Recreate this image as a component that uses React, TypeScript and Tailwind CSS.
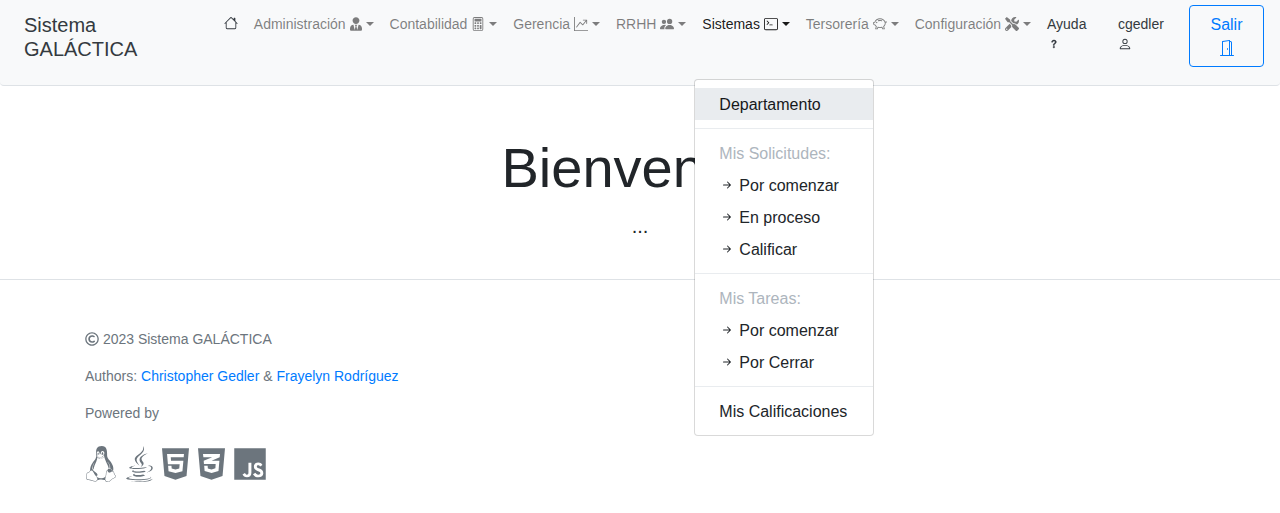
import type { ReactNode } from "react";
import {
  BsArrowRightShort,
  BsCalculator,
  BsDoorOpen,
  BsGraphUpArrow,
  BsHouse,
  BsPeopleFill,
  BsPerson,
  BsPiggyBank,
  BsQuestion,
  BsTerminal,
} from "react-icons/bs";
import { FaCss3Alt, FaHtml5, FaJava, FaJs, FaLinux, FaRegCopyright, FaTools, FaUserTie } from "react-icons/fa";

const navIcon = "inline-block size-[14px] align-[-2px]";

function Caret() {
  return (
    <span className="ml-1 inline-block border-x-4 border-t-4 border-x-transparent border-t-current align-[3px]" />
  );
}

type DropdownProps = {
  label: string;
  icon: ReactNode;
  open?: boolean;
  children?: ReactNode;
};

function NavDropdown({ label, icon, open, children }: DropdownProps) {
  return (
    <li className="relative">
      <button
        type="button"
        aria-haspopup="menu"
        aria-expanded={open ? "true" : "false"}
        className={`cursor-pointer px-2 pt-[9px] pb-2 whitespace-nowrap ${open ? "text-black/90" : "text-black/50"}`}
      >
        {label} {icon}
        <Caret />
      </button>
      {children}
    </li>
  );
}

function MenuItem({ children, active, arrow }: { children: ReactNode; active?: boolean; arrow?: boolean }) {
  return (
    <a
      href="#"
      role="menuitem"
      className={`block px-6 pt-[5px] pb-[3px] whitespace-nowrap ${active ? "bg-[#e9ecef] text-[#16181b]" : "text-[#212529]"}`}
    >
      {arrow && <BsArrowRightShort className="mr-1 inline-block size-4 align-[-2px]" />}
      {children}
    </a>
  );
}

function MenuTitle({ children }: { children: ReactNode }) {
  return <span className="block px-6 pt-[5px] pb-[3px] text-[#adb5bd]">{children}</span>;
}

function Divider() {
  return <hr className="my-2 border-[#e9ecef]" />;
}

export default function App() {
  return (
    <div className="bg-white font-['Liberation_Sans',Arial,sans-serif] text-base text-[#212529]">
      <nav className="flex items-start rounded-b border-b border-[#dee2e6] bg-[#f8f9fa] pt-[5px] pr-4 pb-[18px] pl-6">
        <div className="flex-1 pt-2">
          <a href="#" className="block w-min text-xl leading-6 text-[#343a40]">
            Sistema GALÁCTICA
          </a>
        </div>
        <ul className="flex self-stretch text-sm leading-5">
          <li>
            <a href="#" aria-label="Inicio" className="block px-2 pt-2 pb-2 text-[#343a40]">
              <BsHouse className={navIcon} />
            </a>
          </li>
          <NavDropdown label="Administración" icon={<FaUserTie className="inline-block h-[14px] w-3 align-[-2px]" />} />
          <NavDropdown label="Contabilidad" icon={<BsCalculator className={navIcon} />} />
          <NavDropdown label="Gerencia" icon={<BsGraphUpArrow className={navIcon} />} />
          <NavDropdown label="RRHH" icon={<BsPeopleFill className={navIcon} />} />
          <NavDropdown label="Sistemas" icon={<BsTerminal className={navIcon} />} open>
            <div
              role="menu"
              className="absolute top-full left-0 z-10 mt-3 min-w-[180px] rounded border border-black/15 bg-white bg-clip-padding py-2 text-base leading-6"
            >
              <MenuItem active>Departamento</MenuItem>
              <Divider />
              <MenuTitle>Mis Solicitudes:</MenuTitle>
              <MenuItem arrow>Por comenzar</MenuItem>
              <MenuItem arrow>En proceso</MenuItem>
              <MenuItem arrow>Calificar</MenuItem>
              <Divider />
              <MenuTitle>Mis Tareas:</MenuTitle>
              <MenuItem arrow>Por comenzar</MenuItem>
              <MenuItem arrow>Por Cerrar</MenuItem>
              <Divider />
              <MenuItem>Mis Calificaciones</MenuItem>
            </div>
          </NavDropdown>
          <NavDropdown label="Tersorería" icon={<BsPiggyBank className={navIcon} />} />
          <NavDropdown label="Configuración" icon={<FaTools className={navIcon} />} />
          <li className="w-[71px]">
            <a href="#" className="block px-2 pt-[9px] pb-2 text-[#343a40]">
              Ayuda <BsQuestion className="inline-block size-[14px] stroke-[0.5] align-[-2px]" />
            </a>
          </li>
          <li className="w-[71px]">
            <a href="#" className="block px-2 pt-[9px] pb-2 text-[#343a40]">
              cgedler <BsPerson className={navIcon} />
            </a>
          </li>
        </ul>
        <button
          type="button"
          className="ml-2 w-[75px] cursor-pointer rounded border border-[#007bff] px-3 pt-[7px] pb-[5px] leading-6 text-[#007bff]"
        >
          Salir <BsDoorOpen className="inline-block size-4 align-[-2px]" />
        </button>
      </nav>

      <main className="border-b border-[#dee2e6] pt-12 pb-[38px] text-center">
        <h1 className="text-[56px] leading-[67px]">Bienvenido</h1>
        <p className="mt-[10px] text-xl leading-[30px]">...</p>
      </main>

      <footer className="mx-auto max-w-[1110px] pt-[49px] text-sm leading-[21px] text-[#6c757d]">
        <p className="mb-4">
          <FaRegCopyright className="inline-block size-[14px] align-[-2px]" /> 2023 Sistema GALÁCTICA
        </p>
        <p className="mb-4">
          Authors:{" "}
          <a href="#" className="text-[#007bff]">
            Christopher Gedler
          </a>{" "}
          &amp;{" "}
          <a href="#" className="text-[#007bff]">
            Frayelyn Rodríguez
          </a>
        </p>
        <p>Powered by</p>
        <div className="mt-[22px] flex gap-[9px]">
          <FaLinux className="h-9 w-8" />
          <FaJava className="h-9 w-[27px]" />
          <FaHtml5 className="h-9 w-[27px]" />
          <FaCss3Alt className="h-9 w-[27px]" />
          <FaJs className="h-9 w-8" />
        </div>
      </footer>
    </div>
  );
}
